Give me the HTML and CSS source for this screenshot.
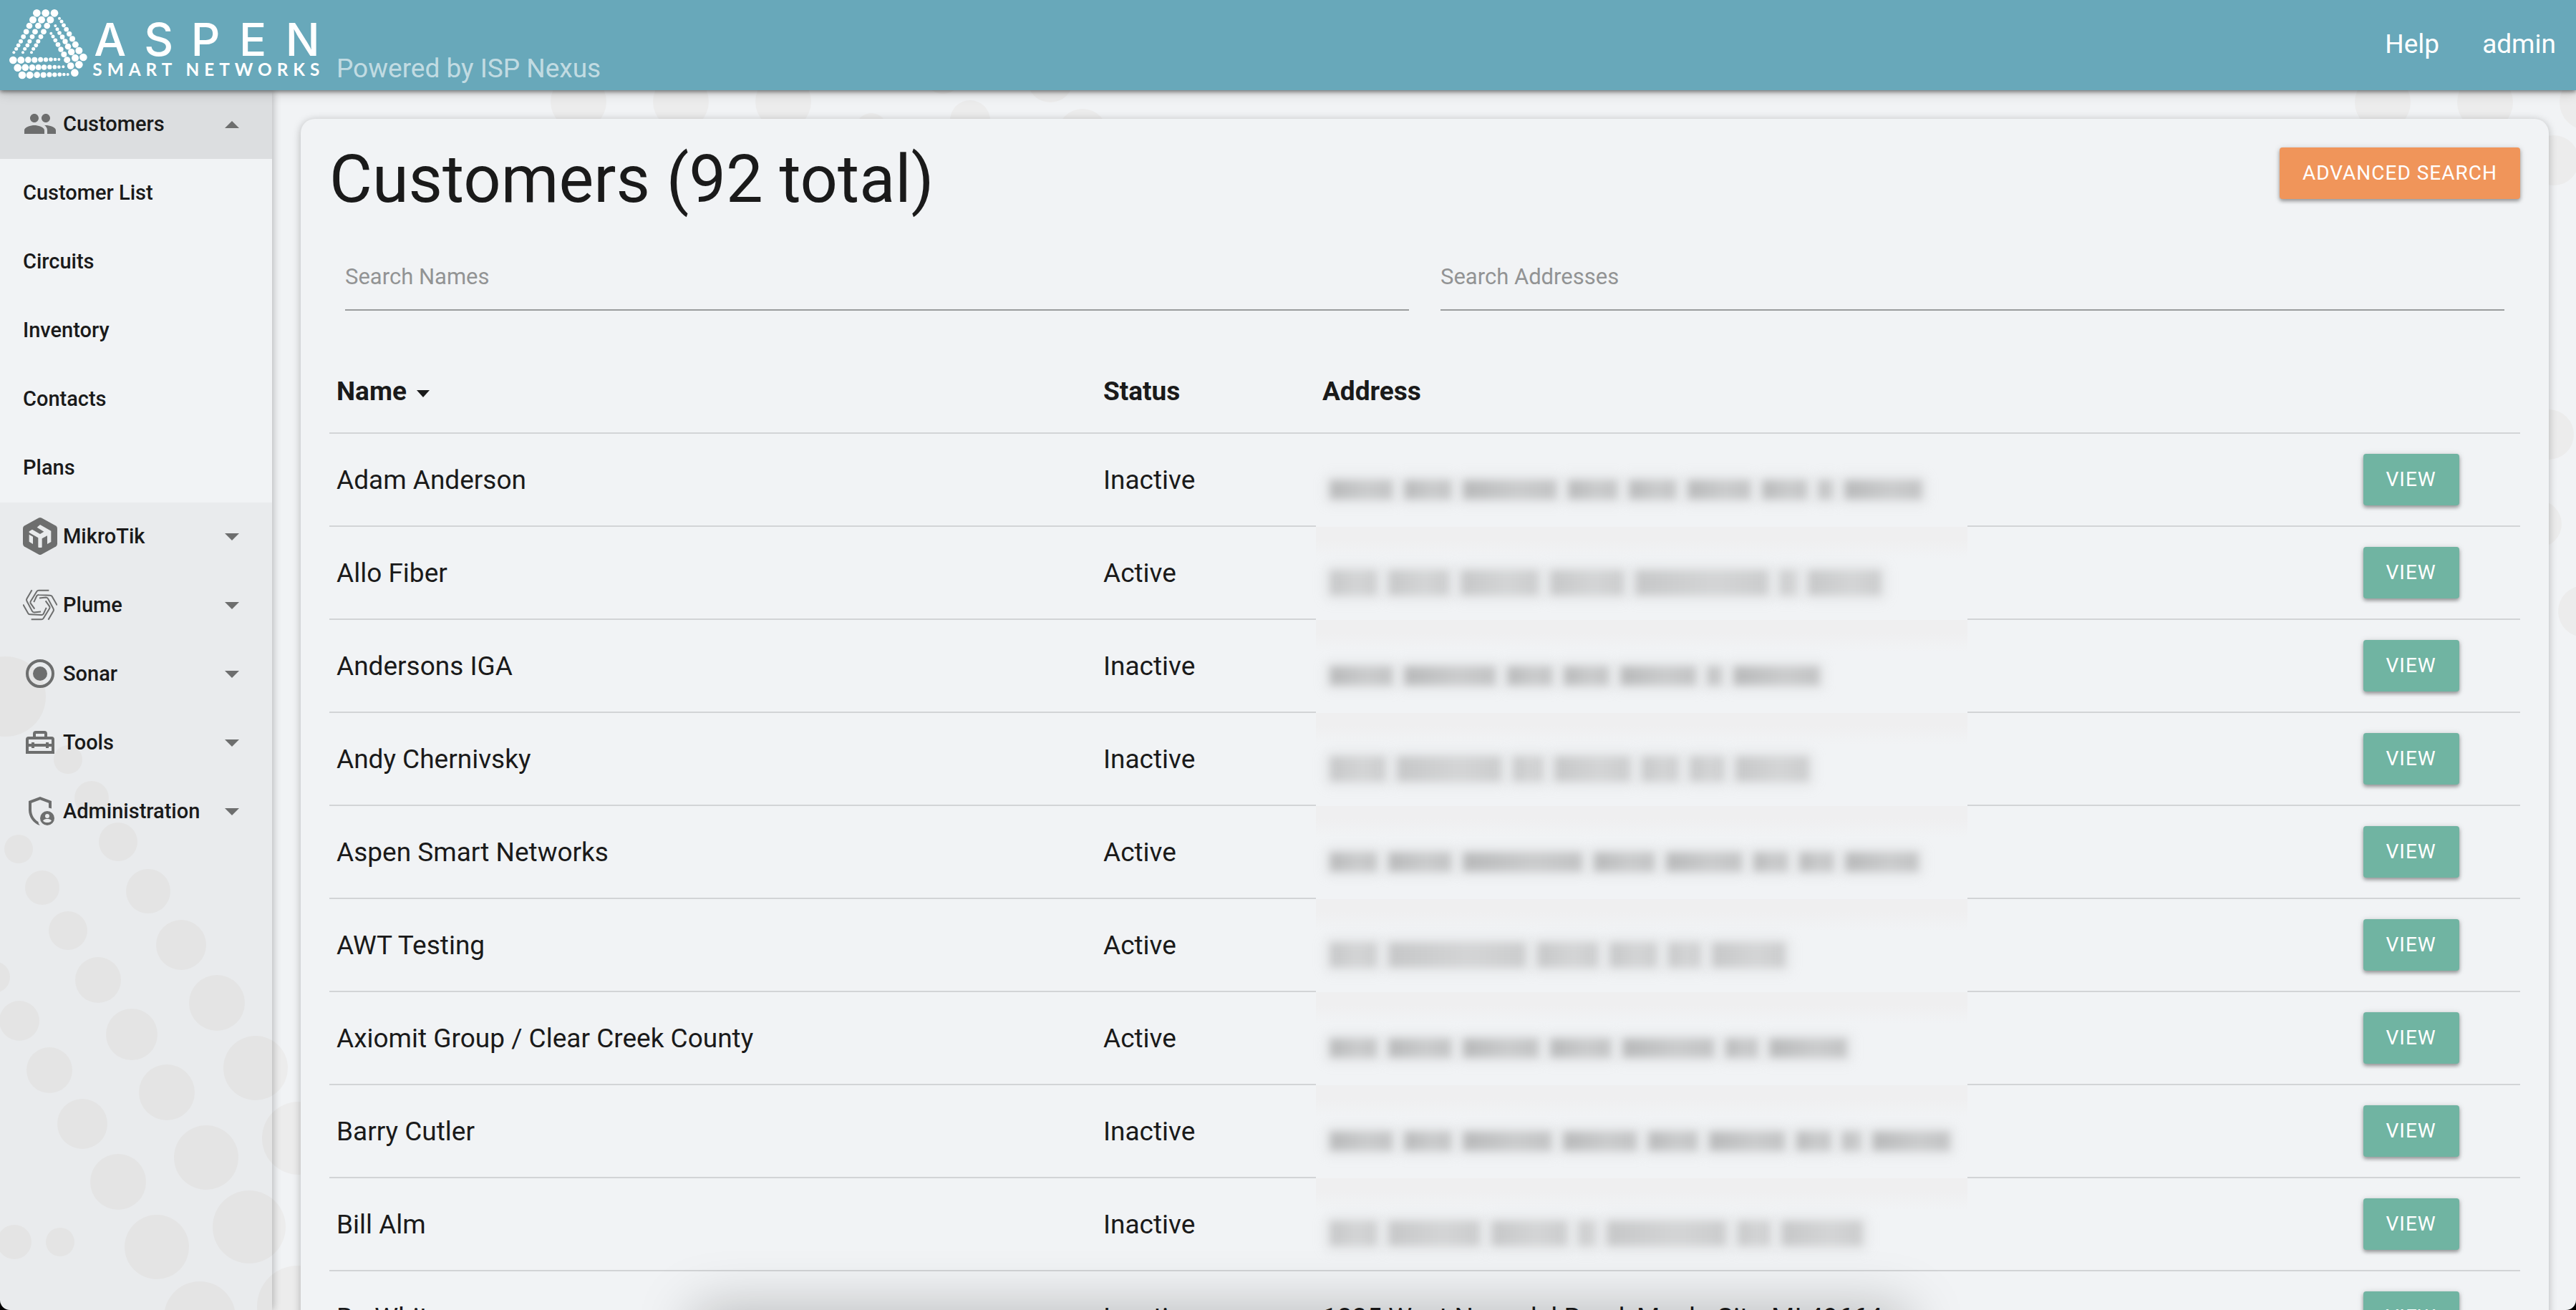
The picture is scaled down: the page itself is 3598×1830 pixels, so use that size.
FILE: index.html
```html
<!DOCTYPE html>
<html lang="en">
<head>
<meta charset="utf-8">
<title>Customers</title>
<link rel="stylesheet" href="styles.css">
</head>
<body>
<div class="app">
  <svg class="backdrop" aria-hidden="true">
    <g>
      <circle cx="8" cy="973" r="56"/><circle cx="95" cy="1061" r="20"/><circle cx="128" cy="1115" r="24"/>
      <circle cx="26" cy="1186" r="20"/><circle cx="59" cy="1240" r="24"/><circle cx="95" cy="1300" r="27"/>
      <circle cx="137" cy="1369" r="32"/><circle cx="184" cy="1445" r="36"/><circle cx="233" cy="1526" r="39"/>
      <circle cx="288" cy="1617" r="45"/><circle cx="348" cy="1714" r="51"/><circle cx="165" cy="1176" r="27"/>
      <circle cx="207" cy="1245" r="31"/><circle cx="253" cy="1320" r="35"/><circle cx="303" cy="1401" r="39"/>
      <circle cx="357" cy="1492" r="45"/><circle cx="417" cy="1590" r="51"/><circle cx="-8" cy="1365" r="22"/>
      <circle cx="27" cy="1426" r="28"/><circle cx="69" cy="1495" r="32"/><circle cx="115" cy="1570" r="35"/>
      <circle cx="165" cy="1651" r="39"/><circle cx="219" cy="1742" r="45"/><circle cx="279" cy="1840" r="50"/>
      <circle cx="416" cy="1825" r="57"/><circle cx="20" cy="1735" r="24"/><circle cx="84" cy="1735" r="20"/>
      <circle cx="808" cy="142" r="39"/><circle cx="951" cy="142" r="39"/><circle cx="1094" cy="142" r="39"/>
      <circle cx="1217" cy="180" r="22"/><circle cx="1355" cy="168" r="28"/><circle cx="1512" cy="187" r="35"/>
      <circle cx="1467" cy="111" r="32"/><circle cx="1317" cy="104" r="27"/>
      <circle cx="3328" cy="143" r="39"/><circle cx="3471" cy="143" r="39"/><circle cx="3614" cy="143" r="39"/>
      <circle cx="3567" cy="224" r="35"/><circle cx="3560" cy="607" r="35"/><circle cx="3545" cy="732" r="33"/>
      <circle cx="3609" cy="854" r="36"/>
    </g>
  </svg>

  <header class="topbar">
    <a class="brand" href="#" aria-label="Aspen Smart Networks">
      <svg class="logo" viewBox="0 0 1380 378">
        <g transform="translate(0 30)">
          <circle cx="154" cy="25" r="16"/><circle cx="191" cy="25" r="16"/><circle cx="228" cy="25" r="16"/>
          <circle cx="138" cy="53" r="15"/><circle cx="174" cy="53" r="15"/><circle cx="211" cy="53" r="15"/>
          <circle cx="123" cy="78" r="13"/><circle cx="160" cy="78" r="13"/><circle cx="197" cy="78" r="13"/>
          <circle cx="110" cy="103" r="11.5"/><circle cx="147" cy="103" r="11.5"/><circle cx="183" cy="103" r="11.5"/>
          <circle cx="98" cy="124" r="10"/><circle cx="135" cy="124" r="10"/><circle cx="171" cy="124" r="10"/>
          <circle cx="87" cy="143" r="9"/><circle cx="124" cy="143" r="9"/><circle cx="160" cy="143" r="9"/>
          <circle cx="77" cy="160" r="8.5"/><circle cx="115" cy="160" r="8.5"/><circle cx="151" cy="160" r="8.5"/>
          <circle cx="68" cy="175" r="7.5"/><circle cx="104" cy="175" r="7.5"/><circle cx="140" cy="175" r="7.5"/>
          <circle cx="58" cy="190" r="6"/><circle cx="96" cy="190" r="6"/><circle cx="132" cy="190" r="6"/>
          <circle cx="249" cy="47" r="6"/><circle cx="258" cy="60" r="7.5"/><circle cx="267" cy="76" r="8.5"/>
          <circle cx="278" cy="93" r="10"/><circle cx="290" cy="112" r="11"/><circle cx="303" cy="133" r="12"/>
          <circle cx="316" cy="157" r="13.5"/><circle cx="331" cy="182" r="15"/><circle cx="349" cy="210" r="16"/>
          <circle cx="232" cy="78" r="6"/><circle cx="240" cy="92" r="7.5"/><circle cx="249" cy="108" r="8.5"/>
          <circle cx="261" cy="125" r="10"/><circle cx="273" cy="144" r="11"/><circle cx="285" cy="165" r="13"/>
          <circle cx="299" cy="188" r="14"/><circle cx="315" cy="213" r="15"/><circle cx="331" cy="241" r="16"/>
          <circle cx="214" cy="110" r="6"/><circle cx="222" cy="123" r="7.5"/><circle cx="232" cy="139" r="8.5"/>
          <circle cx="243" cy="157" r="10"/><circle cx="255" cy="177" r="11"/><circle cx="268" cy="198" r="12"/>
          <circle cx="281" cy="221" r="13.5"/><circle cx="296" cy="246" r="14.5"/><circle cx="313" cy="275" r="16"/>
          <circle cx="55" cy="222" r="16"/><circle cx="88" cy="222" r="15"/><circle cx="118" cy="221" r="13"/>
          <circle cx="145" cy="221" r="12"/><circle cx="170" cy="220" r="10.5"/><circle cx="192" cy="220" r="9.5"/>
          <circle cx="213" cy="219" r="8.5"/><circle cx="231" cy="219" r="7"/><circle cx="247" cy="219" r="6"/>
          <circle cx="74" cy="254" r="16"/><circle cx="106" cy="253" r="14.5"/><circle cx="135" cy="253" r="13"/>
          <circle cx="161" cy="252" r="12"/><circle cx="185" cy="252" r="11"/><circle cx="208" cy="251" r="9.5"/>
          <circle cx="229" cy="251" r="8.5"/><circle cx="247" cy="251" r="7"/><circle cx="265" cy="250" r="6"/>
          <circle cx="93" cy="285" r="16"/><circle cx="125" cy="285" r="15"/><circle cx="155" cy="284" r="13"/>
          <circle cx="182" cy="284" r="12"/><circle cx="207" cy="283" r="10.5"/><circle cx="229" cy="283" r="9.5"/>
          <circle cx="250" cy="282" r="8.5"/><circle cx="268" cy="282" r="7"/><circle cx="284" cy="282" r="6"/>
        </g>
        <text class="logo-name" x="394 604 800 1002 1196" y="234">ASPEN</text>
        <text class="logo-sub" x="388" y="317">SMART NETWORKS</text>
      </svg>
    </a>
    <span class="tagline">Powered by ISP Nexus</span>
    <nav class="account"><a href="#">Help</a><a href="#">admin</a></nav>
  </header>

  <div class="body">
    <nav class="sidebar">
      <button class="group open" type="button" aria-expanded="true">
        <svg class="icon" viewBox="0 0 24 24"><path d="M16 11c1.66 0 2.99-1.34 2.99-3S17.66 5 16 5s-3 1.34-3 3 1.34 3 3 3zm-8 0c1.66 0 2.99-1.34 2.99-3S9.66 5 8 5 5 6.34 5 8s1.34 3 3 3zm0 2c-2.33 0-7 1.17-7 3.5V19h14v-2.500c0-2.330-4.670-3.500-7-3.500zm8 0c-.29 0-.62.02-.97.05 1.160.84 1.970 1.970 1.970 3.450V19h6v-2.500c0-2.330-4.670-3.500-7-3.500z"/></svg>
        <span>Customers</span>
        <svg class="caret" viewBox="0 0 24 24"><path d="M7 15l5-5 5 5z"/></svg>
      </button>
      <div class="submenu">
        <a href="#">Customer List</a>
        <a href="#">Circuits</a>
        <a href="#">Inventory</a>
        <a href="#">Contacts</a>
        <a href="#">Plans</a>
      </div>
      <button class="group" type="button" aria-expanded="false">
        <svg class="icon tall" viewBox="96 132 144 156"><path d="M162 133.500q6-3 12 0l60 33q6 4 6 11v65q0 7-6 11l-60 33q-6 3-12 0l-60-33q-6-4-6-11v-65q0-7 6-11z"/><path class="cut" d="M122 190l13-8 33 19 16-10-29-18 13-11 46 26v46l-16 9v-35l-22 12v35q0 3-3 3h-10q-3 0-3-3v-38l-38-22zM122 203l16 9v31l-16-10z"/></svg>
        <span>MikroTik</span>
        <svg class="caret" viewBox="0 0 24 24"><path d="M7 10l5 5 5-5z"/></svg>
      </button>
      <button class="group" type="button" aria-expanded="false">
        <svg class="icon" viewBox="-72 -72 144 144">
          <g class="line" stroke-width="6">
            <path d="M37-61H-6q-5 0-8 5L-39-16q-3 4-1 9L-23 17"/>
            <path transform="rotate(60)" d="M37-61H-6q-5 0-8 5L-39-16q-3 4-1 9L-23 17"/>
            <path transform="rotate(120)" d="M37-61H-6q-5 0-8 5L-39-16q-3 4-1 9L-23 17"/>
            <path transform="rotate(180)" d="M37-61H-6q-5 0-8 5L-39-16q-3 4-1 9L-23 17"/>
            <path transform="rotate(240)" d="M37-61H-6q-5 0-8 5L-39-16q-3 4-1 9L-23 17"/>
            <path transform="rotate(300)" d="M37-61H-6q-5 0-8 5L-39-16q-3 4-1 9L-23 17"/>
          </g>
        </svg>
        <span>Plume</span>
        <svg class="caret" viewBox="0 0 24 24"><path d="M7 10l5 5 5-5z"/></svg>
      </button>
      <button class="group" type="button" aria-expanded="false">
        <svg class="icon" viewBox="0 0 24 24"><circle class="line" cx="12" cy="12" r="9" stroke-width="2"/><circle cx="12" cy="12" r="5"/></svg>
        <span>Sonar</span>
        <svg class="caret" viewBox="0 0 24 24"><path d="M7 10l5 5 5-5z"/></svg>
      </button>
      <button class="group" type="button" aria-expanded="false">
        <svg class="icon" viewBox="0 0 24 24"><path class="line" stroke-width="2" d="M3 19V10q0-1 1-1H20q1 0 1 1v9zM3 14H21M8 9V6q0-1 1-1h6q1 0 1 1v3"/><path d="M6 12h2v4H6zM16 12h2v4h-2z"/></svg>
        <span>Tools</span>
        <svg class="caret" viewBox="0 0 24 24"><path d="M7 10l5 5 5-5z"/></svg>
      </button>
      <button class="group" type="button" aria-expanded="false">
        <svg class="icon" viewBox="0 0 24 24"><path d="M20 10.300V5l-8-3-8 3v6.090c0 5.050 3.410 9.760 8 10.910-1.200-1.300-.9-1.100-1.300-2.550C8 17.900 6 14.700 6 11.090v-4.700l6-2.250 6 2.250v3.310c.7.100 1.400.3 2 .6z"/><circle cx="17" cy="17" r="5"/><circle class="cut" cx="17" cy="15.500" r="1.500"/><path class="cut" d="M14 18.700c.7-1 2-1.200 3-1.200s2.300.2 3 1.200c-.7.900-1.800 1.300-3 1.300s-2.300-.4-3-1.300z"/></svg>
        <span>Administration</span>
        <svg class="caret" viewBox="0 0 24 24"><path d="M7 10l5 5 5-5z"/></svg>
      </button>
    </nav>

    <main class="main">
      <section class="card">
        <div class="card-head">
          <h1>Customers (92 total)</h1>
          <button class="btn btn-search" type="button">ADVANCED SEARCH</button>
        </div>
        <form class="filters">
          <input type="text" placeholder="Search Names" aria-label="Search Names">
          <input type="text" placeholder="Search Addresses" aria-label="Search Addresses">
        </form>
        <table>
          <colgroup><col class="c-name"><col class="c-status"><col class="c-address"><col class="c-action"></colgroup>
          <thead>
            <tr>
              <th><button class="sort" type="button">Name<svg viewBox="0 0 18 10"><path d="M0 0h18l-9 10z"/></svg></button></th>
              <th>Status</th><th>Address</th><th></th>
            </tr>
          </thead>
          <tbody>
            <tr><td>Adam Anderson</td><td>Inactive</td><td class="hidden-cell"><div class="redacted first"><i style="width:86px"></i><i style="width:64px"></i><i style="width:129px"></i><i style="width:67px"></i><i style="width:64px"></i><i style="width:86px"></i><i style="width:61px"></i><i style="width:18px"></i><i style="width:107px"></i></div></td><td><button class="btn" type="button">VIEW</button></td></tr>
            <tr><td>Allo Fiber</td><td>Active</td><td class="hidden-cell"><div class="redacted soft"><i style="width:64px"></i><i style="width:83px"></i><i style="width:107px"></i><i style="width:101px"></i><i style="width:184px"></i><i style="width:21px"></i><i style="width:101px"></i></div></td><td><button class="btn" type="button">VIEW</button></td></tr>
            <tr><td>Andersons IGA</td><td>Inactive</td><td class="hidden-cell"><div class="redacted"><i style="width:86px"></i><i style="width:126px"></i><i style="width:61px"></i><i style="width:61px"></i><i style="width:104px"></i><i style="width:18px"></i><i style="width:119px"></i></div></td><td><button class="btn" type="button">VIEW</button></td></tr>
            <tr><td>Andy Chernivsky</td><td>Inactive</td><td class="hidden-cell"><div class="redacted soft"><i style="width:76px"></i><i style="width:144px"></i><i style="width:40px"></i><i style="width:104px"></i><i style="width:49px"></i><i style="width:46px"></i><i style="width:101px"></i></div></td><td><button class="btn" type="button">VIEW</button></td></tr>
            <tr><td>Aspen Smart Networks</td><td>Active</td><td class="hidden-cell"><div class="redacted"><i style="width:64px"></i><i style="width:86px"></i><i style="width:165px"></i><i style="width:83px"></i><i style="width:104px"></i><i style="width:46px"></i><i style="width:46px"></i><i style="width:101px"></i></div></td><td><button class="btn" type="button">VIEW</button></td></tr>
            <tr><td>AWT Testing</td><td>Active</td><td class="hidden-cell"><div class="redacted soft"><i style="width:64px"></i><i style="width:190px"></i><i style="width:83px"></i><i style="width:64px"></i><i style="width:43px"></i><i style="width:101px"></i></div></td><td><button class="btn" type="button">VIEW</button></td></tr>
            <tr><td>Axiomit Group / Clear Creek County</td><td>Active</td><td class="hidden-cell"><div class="redacted"><i style="width:64px"></i><i style="width:86px"></i><i style="width:104px"></i><i style="width:83px"></i><i style="width:126px"></i><i style="width:43px"></i><i style="width:107px"></i></div></td><td><button class="btn" type="button">VIEW</button></td></tr>
            <tr><td>Barry Cutler</td><td>Inactive</td><td class="hidden-cell"><div class="redacted"><i style="width:86px"></i><i style="width:64px"></i><i style="width:122px"></i><i style="width:101px"></i><i style="width:67px"></i><i style="width:104px"></i><i style="width:46px"></i><i style="width:24px"></i><i style="width:107px"></i></div></td><td><button class="btn" type="button">VIEW</button></td></tr>
            <tr><td>Bill Alm</td><td>Inactive</td><td class="hidden-cell"><div class="redacted soft last"><i style="width:64px"></i><i style="width:126px"></i><i style="width:104px"></i><i style="width:21px"></i><i style="width:165px"></i><i style="width:43px"></i><i style="width:112px"></i></div></td><td><button class="btn" type="button">VIEW</button></td></tr>
            <tr><td>Bo White</td><td>Inactive</td><td>1835 West Newndel Road, Maple City, MI 49664</td><td><button class="btn" type="button">VIEW</button></td></tr>
          </tbody>
        </table>
      </section>
    </main>
  </div>
  <div class="dock-shadow" aria-hidden="true"></div>
</div>
</body>
</html>
```
FILE: styles.css
```css
:root {
  --surface: #f1f3f5;
  --ink: #1a1a1a;
  --icon: #6d6e6e;
}
* { box-sizing: border-box; }
html { background: #000; }
body {
  margin: 0;
  font-family: Roboto, "Liberation Sans", sans-serif;
  font-size: 37px;
  color: var(--ink);
}
button, input { font: inherit; color: inherit; }
a { color: inherit; text-decoration: none; }

.app {
  position: relative;
  display: flex;
  flex-direction: column;
  height: 100vh;
  overflow: hidden;
  background: var(--surface);
  border-radius: 0 0 14px 14px;
}
.backdrop {
  position: absolute;
  inset: 0;
  width: 100%;
  height: 100%;
  fill: #ececec;
}

/* Top bar */
.topbar {
  position: relative;
  z-index: 2;
  display: flex;
  flex: none;
  align-items: center;
  height: 126px;
  padding-right: 28px;
  background: #68a8ba;
  color: #fff;
  box-shadow: 0 2px 6px rgba(0, 0, 0, .5), 0 4px 16px rgba(0, 0, 0, .16);
}
.brand { display: block; height: 126px; }
.logo { display: block; width: 460px; height: 126px; fill: #fff; }
.logo-name { font: 500 190px Inter, sans-serif; }
.logo-sub { font: 700 73px Lato, sans-serif; letter-spacing: 21px; }
.tagline {
  align-self: flex-end;
  padding: 0 0 8px 10px;
  line-height: 44px;
  color: rgba(255, 255, 255, .62);
}
.account {
  display: flex;
  gap: 60px;
  margin-left: auto;
  padding-bottom: 4px;
}

/* Sidebar */
.body { position: relative; display: flex; flex: 1; min-height: 0; }
.sidebar {
  flex: none;
  width: 380px;
  background: rgba(0, 0, 0, .03);
  box-shadow: 2px 0 10px rgba(0, 0, 0, .24);
  font-size: 29px;
  font-weight: 500;
}
.group {
  display: flex;
  align-items: center;
  width: 100%;
  height: 96px;
  padding: 0 32px 2px;
  gap: 8px;
  border: 0;
  background: none;
  text-align: left;
}
.group.open { background: rgba(0, 0, 0, .055); }
.icon { flex: none; width: 48px; height: 48px; fill: var(--icon); }
.icon.tall { height: 52px; }
.icon .line { fill: none; stroke: var(--icon); }
.icon .cut { fill: #e9ebec; }
.caret { flex: none; width: 48px; height: 48px; margin-left: auto; fill: var(--icon); }
.submenu { display: flex; flex-direction: column; background: var(--surface); }
.submenu a { height: 96px; padding: 0 32px; line-height: 94px; }

/* Customer card */
.main { flex: 1; min-width: 0; padding: 40px 38px 0 40px; }
.card {
  padding: 40px;
  background: var(--surface);
  border-radius: 20px;
  box-shadow: 0 2px 12px rgba(0, 0, 0, .26);
}
.card-head {
  display: flex;
  align-items: flex-start;
  justify-content: space-between;
  margin-bottom: 44px;
}
h1 { margin: 0; font-size: 92px; font-weight: 400; line-height: 90px; }
.btn {
  display: block;
  height: 72px;
  padding: 0 32px;
  border: 0;
  border-radius: 4px;
  background: #70b4a2;
  color: #fff;
  font-size: 28px;
  line-height: 68px;
  letter-spacing: 1px;
  box-shadow: 0 3px 5px rgba(0, 0, 0, .32), 0 1px 10px rgba(0, 0, 0, .14);
}
.btn-search { background: #f0955a; }
.filters { display: flex; gap: 44px; margin-bottom: 54px; padding: 0 22px; }
.filters input {
  flex: 1;
  min-width: 0;
  height: 94px;
  padding: 0;
  border: 0;
  border-bottom: 2px solid #9a9c9d;
  border-radius: 0;
  background: none;
  font-size: 31px;
}
.filters input::placeholder { color: #929394; opacity: 1; }

table { width: 100%; table-layout: fixed; border-collapse: separate; border-spacing: 0; }
.c-name { width: 35%; }
.c-status { width: 10%; }
.c-address { width: 47.5%; }
.c-action { width: 7.5%; }
th, td {
  padding: 0 10px;
  border-bottom: 2px solid #d2d4d6;
  text-align: left;
  white-space: nowrap;
}
th { height: 118px; font-weight: 700; }
td { height: 130px; }
.sort {
  display: flex;
  align-items: center;
  gap: 14px;
  padding: 0;
  border: 0;
  background: none;
}
.sort svg { width: 18px; height: 10px; margin-top: 8px; fill: var(--ink); }

/* Masked addresses: one soft bar per word */
.hidden-cell { padding: 0 1px; }
.redacted {
  position: relative;
  display: flex;
  align-items: center;
  gap: 18px;
  width: 910px;
  max-width: 100%;
  height: 130px;
  margin-bottom: -2px;
  padding: 26px 0 0 20px;
  background: linear-gradient(#efeff0, #efeff0 18px, #f1f3f5 44px, #f1f3f5);
}
.redacted.first { background: var(--surface); }
.redacted.last { height: 128px; margin-bottom: 0; }
.redacted i {
  height: 26px;
  background: linear-gradient(90deg, #b8b9ba, #cbcccd 60%, #c2c3c4);
  box-shadow: 0 0 12px 6px rgba(190, 190, 190, .28);
  filter: blur(6px);
}
.redacted.soft i {
  height: 34px;
  background: linear-gradient(90deg, #c6c7c8, #d4d5d6 60%, #cbcccd);
}

.dock-shadow {
  position: absolute;
  top: 100%;
  left: 27%;
  right: 26%;
  height: 80px;
  box-shadow: 0 0 80px rgba(0, 0, 0, .26);
}
```
